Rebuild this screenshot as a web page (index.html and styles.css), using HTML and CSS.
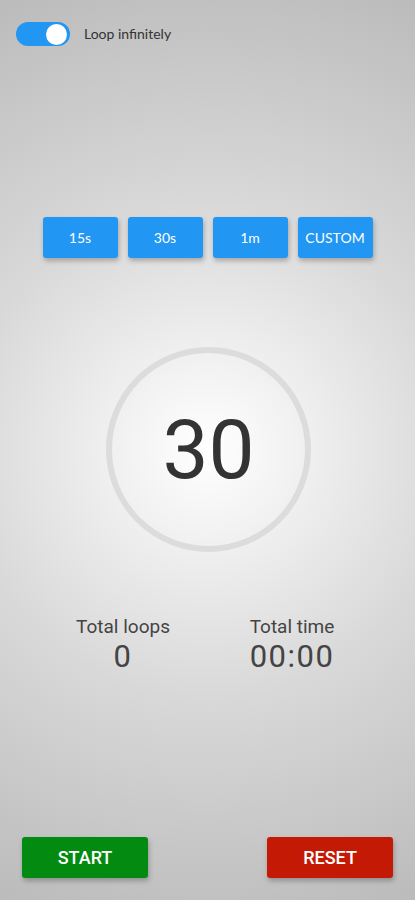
FILE: index.html
```html
<!DOCTYPE html>
<html lang="en">
<head>
	<meta charset="UTF-8">
	<meta name="viewport" content="width=device-width,user-scalable=no">
	<title>Loop timer</title>
	<link rel="stylesheet" href="styles.css">
</head>
<body>
	<section class="wrap">
		<div class="loop">
			<span class="switch on"><i></i></span>
			<span class="loop-text">Loop infinitely</span>
		</div>
		<nav class="presets">
			<a href="javascript:;">15s</a>
			<a href="javascript:;">30s</a>
			<a href="javascript:;">1m</a>
			<a href="javascript:;">CUSTOM</a>
		</nav>
		<div class="dial">
			<span class="count">30</span>
		</div>
		<div class="stats">
			<div class="stat">
				<p class="stat-name">Total loops</p>
				<p class="stat-value">0</p>
			</div>
			<div class="stat">
				<p class="stat-name">Total time</p>
				<p class="stat-value">00:00</p>
			</div>
		</div>
		<div class="actions">
			<a href="javascript:;" class="btn start">START</a>
			<a href="javascript:;" class="btn reset">RESET</a>
		</div>
	</section>
</body>
</html>
```

FILE: styles.css
```css
body{
	margin: 0;
	font-family: Lato, "Open Sans", sans-serif;
}
.wrap{
	height: 900px;
	box-sizing: border-box;
	padding: 22px 0 22px;
	display: flex;
	flex-direction: column;
	align-items: center;
	background: radial-gradient(circle at 50% 50%, #fff 0, #f1f1f1 90px, #d8d8d8 250px, #bdbdbd 480px, #b0b0b0 620px);
}
.loop{
	align-self: flex-start;
	display: flex;
	align-items: center;
	padding-left: 16px;
	height: 24px;
}
.switch{
	width: 54px;
	height: 24px;
	border-radius: 12px;
	background: #2196f3;
	position: relative;
	display: block;
}
.switch i{
	position: absolute;
	top: 2px;
	right: 3px;
	width: 21px;
	height: 21px;
	border-radius: 50%;
	background: #fff;
}
.loop-text{
	margin-left: 14px;
	margin-top: -2px;
	font-size: 14px;
	color: #333;
}
.presets{
	margin-top: 171px;
	display: flex;
	gap: 10px;
}
.presets a{
	width: 75px;
	height: 41px;
	display: flex;
	align-items: center;
	justify-content: center;
	background: #2196f3;
	color: #fff;
	font-size: 14px;
	text-decoration: none;
	border-radius: 3px;
	box-shadow: 1px 3px 5px rgba(0,0,0,.25);
}
.dial{
	margin-top: 89px;
	width: 193px;
	height: 193px;
	border: 6px solid #dcdcdc;
	border-radius: 50%;
	display: flex;
	align-items: center;
	justify-content: center;
	margin-left: 2px;
}
.count{
	font-family: Roboto, "Liberation Sans", sans-serif;
	font-size: 82px;
	color: #333;
}
.stats{
	margin-top: 64px;
	display: flex;
	gap: 49px;
}
.stat{
	width: 120px;
	text-align: center;
	font-family: Roboto, "Liberation Sans", sans-serif;
	color: #444;
}
.stat p{
	margin: 0;
}
.stat-name{
	font-size: 19px;
	line-height: 22px;
}
.stat-value{
	font-size: 31px;
	line-height: 38px;
	letter-spacing: 1.5px;
}
.actions{
	margin-top: auto;
	align-self: stretch;
	display: flex;
	justify-content: space-between;
	padding: 0 22px;
}
.btn{
	width: 126px;
	height: 41px;
	display: flex;
	align-items: center;
	justify-content: center;
	color: #fff;
	font-family: Roboto, "Liberation Sans", sans-serif;
	font-weight: 500;
	font-size: 18px;
	text-decoration: none;
	border-radius: 3px;
	box-shadow: 1px 3px 5px rgba(0,0,0,.25);
}
.start{
	background: #038a10;
}
.reset{
	background: #c41a05;
}
```
